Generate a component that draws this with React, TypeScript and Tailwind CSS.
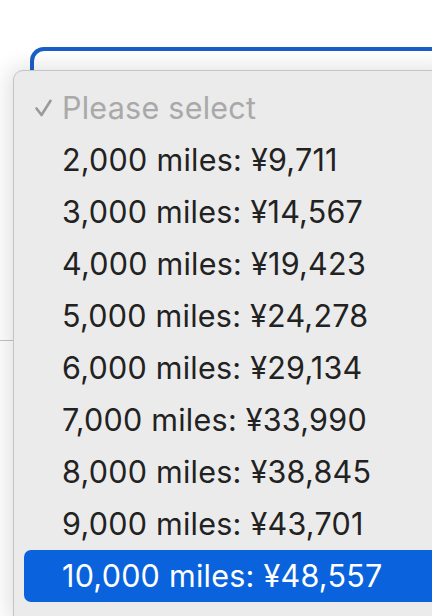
const options = [
  '2,000 miles: ¥9,711',
  '3,000 miles: ¥14,567',
  '4,000 miles: ¥19,423',
  '5,000 miles: ¥24,278',
  '6,000 miles: ¥29,134',
  '7,000 miles: ¥33,990',
  '8,000 miles: ¥38,845',
  '9,000 miles: ¥43,701',
  '10,000 miles: ¥48,557',
];

export default function App() {
  const selected = 8;

  return (
    <div
      className="relative h-[616px] w-[432px] overflow-hidden bg-white"
      style={{ fontFamily: 'Inter, "Noto Sans", sans-serif' }}
    >
      {/* page behind the menu */}
      <div className="pt-[47px] pl-[30px]">
        <div className="h-[80px] w-[440px] rounded-tl-[14px] border-l-4 border-t-4 border-[#1a5fc8] bg-white" />
      </div>
      <div className="mt-[213px] h-px w-[20px] bg-[#c4c4c4]" />

      {/* open select menu */}
      <div className="absolute left-[13px] top-[70px] w-[440px] rounded-tl-[10px] border border-[#c4c4c4] bg-[#ebebeb] pt-[11px] pl-[10px] tracking-[0.25px] shadow-[-4px_-2px_22px_rgba(0,0,0,0.13)]">
        <div className="flex h-[52px] items-center text-[30.5px] text-[#a9a9a9]">
          <span className="flex w-[38px] justify-start pl-[11px]">
            <svg width="17" height="18" viewBox="0 0 17 18" fill="none">
              <path d="M1.5 9.5 L6.5 16 L15.5 1.8" stroke="#9a9a9a" strokeWidth="2.6" strokeLinecap="round" strokeLinejoin="round" />
            </svg>
          </span>
          <span>Please select</span>
        </div>
        {options.map((label, i) => (
          <div
            key={label}
            className={`flex h-[52px] items-center rounded-l-[7px] pl-[38px] text-[30.5px] ${
              i === selected ? 'bg-[#0a63dc] text-white' : 'text-[#222222]'
            }`}
          >
            {label}
          </div>
        ))}
        <div className="h-[20px]" />
      </div>
    </div>
  );
}
